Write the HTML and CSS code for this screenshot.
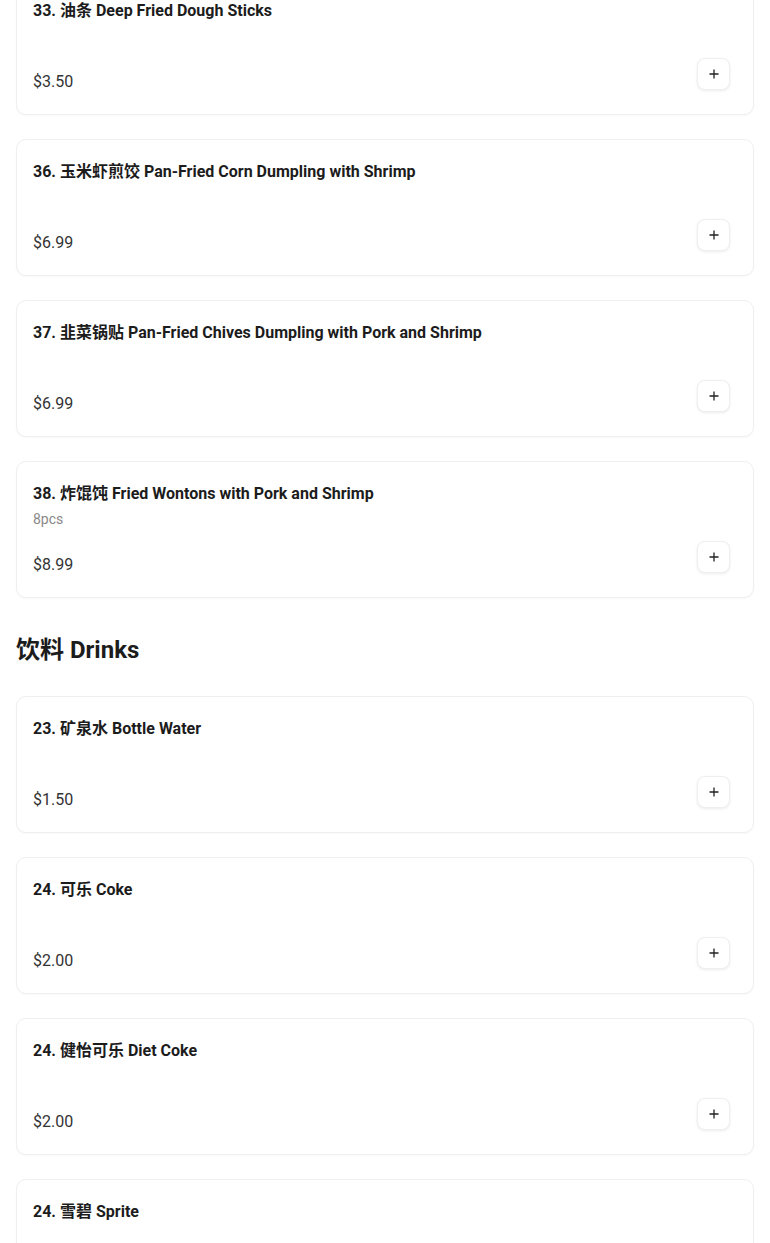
FILE: index.html
```html
<!DOCTYPE html>
<html lang="zh">
  <head>
    <meta charset="UTF-8" />
    <meta name="viewport" content="width=device-width, initial-scale=1.0" />
    <title>Menu</title>
    <link rel="stylesheet" href="styles.css">
  </head>
  <body>
    <div class="menu">
      <div class="list">
        <div class="item">
          <div class="item_name">33. 油条 Deep Fried Dough Sticks</div>
          <div class="item_bottom">
            <span class="price">$3.50</span>
            <button class="add_btn"><svg width="12" height="12" viewBox="0 0 12 12"><path d="M6 1.5v9M1.5 6h9" stroke="#222" stroke-width="1.3" fill="none"/></svg></button>
          </div>
        </div>
        <div class="item">
          <div class="item_name">36. 玉米虾煎饺 Pan-Fried Corn Dumpling with Shrimp</div>
          <div class="item_bottom">
            <span class="price">$6.99</span>
            <button class="add_btn"><svg width="12" height="12" viewBox="0 0 12 12"><path d="M6 1.5v9M1.5 6h9" stroke="#222" stroke-width="1.3" fill="none"/></svg></button>
          </div>
        </div>
        <div class="item">
          <div class="item_name">37. 韭菜锅贴 Pan-Fried Chives Dumpling with Pork and Shrimp</div>
          <div class="item_bottom">
            <span class="price">$6.99</span>
            <button class="add_btn"><svg width="12" height="12" viewBox="0 0 12 12"><path d="M6 1.5v9M1.5 6h9" stroke="#222" stroke-width="1.3" fill="none"/></svg></button>
          </div>
        </div>
        <div class="item">
          <div class="item_name">38. 炸馄饨 Fried Wontons with Pork and Shrimp</div>
          <div class="item_desc">8pcs</div>
          <div class="item_bottom">
            <span class="price">$8.99</span>
            <button class="add_btn"><svg width="12" height="12" viewBox="0 0 12 12"><path d="M6 1.5v9M1.5 6h9" stroke="#222" stroke-width="1.3" fill="none"/></svg></button>
          </div>
        </div>
      </div>

      <h2 class="section_title">饮料 Drinks</h2>

      <div class="list">
        <div class="item">
          <div class="item_name">23. 矿泉水 Bottle Water</div>
          <div class="item_bottom">
            <span class="price">$1.50</span>
            <button class="add_btn"><svg width="12" height="12" viewBox="0 0 12 12"><path d="M6 1.5v9M1.5 6h9" stroke="#222" stroke-width="1.3" fill="none"/></svg></button>
          </div>
        </div>
        <div class="item">
          <div class="item_name">24. 可乐 Coke</div>
          <div class="item_bottom">
            <span class="price">$2.00</span>
            <button class="add_btn"><svg width="12" height="12" viewBox="0 0 12 12"><path d="M6 1.5v9M1.5 6h9" stroke="#222" stroke-width="1.3" fill="none"/></svg></button>
          </div>
        </div>
        <div class="item">
          <div class="item_name">24. 健怡可乐 Diet Coke</div>
          <div class="item_bottom">
            <span class="price">$2.00</span>
            <button class="add_btn"><svg width="12" height="12" viewBox="0 0 12 12"><path d="M6 1.5v9M1.5 6h9" stroke="#222" stroke-width="1.3" fill="none"/></svg></button>
          </div>
        </div>
        <div class="item">
          <div class="item_name">24. 雪碧 Sprite</div>
          <div class="item_bottom">
            <span class="price">$2.00</span>
            <button class="add_btn"><svg width="12" height="12" viewBox="0 0 12 12"><path d="M6 1.5v9M1.5 6h9" stroke="#222" stroke-width="1.3" fill="none"/></svg></button>
          </div>
        </div>
      </div>
    </div>
  </body>
</html>
```

FILE: styles.css
```css
body {
  margin: 0;
  background-color: white;
  color: #1c1c1c;
  font-family: Roboto, "Noto Sans CJK SC", sans-serif;
}

/* page is scrolled a bit into the list */
.menu {
  padding: 0 16px;
  margin-top: -22px;
}

.list {
  display: flex;
  flex-direction: column;
  gap: 24px;
}

.item {
  box-sizing: border-box;
  min-height: 137px;
  display: flex;
  flex-direction: column;
  padding: 20px 16px;
  border: 1px solid #efefef;
  border-radius: 10px;
  background-color: white;
  box-shadow: 0 1px 2px rgba(0, 0, 0, 0.03);
}

.item_name {
  font-size: 16px;
  line-height: 24px;
  font-weight: 700;
  color: #1c1c1c;
}

.item_desc {
  margin-top: 3px;
  font-size: 14px;
  line-height: 20px;
  color: #888;
}

.item_bottom {
  margin-top: auto;
  display: flex;
  justify-content: space-between;
  align-items: flex-end;
}

.price {
  font-size: 16px;
  line-height: 24px;
  color: #333;
}

.add_btn {
  width: 33px;
  height: 32px;
  margin: 0 7px 4px 0;
  padding: 0;
  display: flex;
  align-items: center;
  justify-content: center;
  background-color: white;
  border: 1px solid #efefef;
  border-radius: 8px;
  box-shadow: 0 1px 3px rgba(0, 0, 0, 0.08);
  cursor: pointer;
}

.section_title {
  margin: 36px 0 30px;
  font-size: 24px;
  line-height: 32px;
  font-weight: 700;
  color: #1c1c1c;
}
```
